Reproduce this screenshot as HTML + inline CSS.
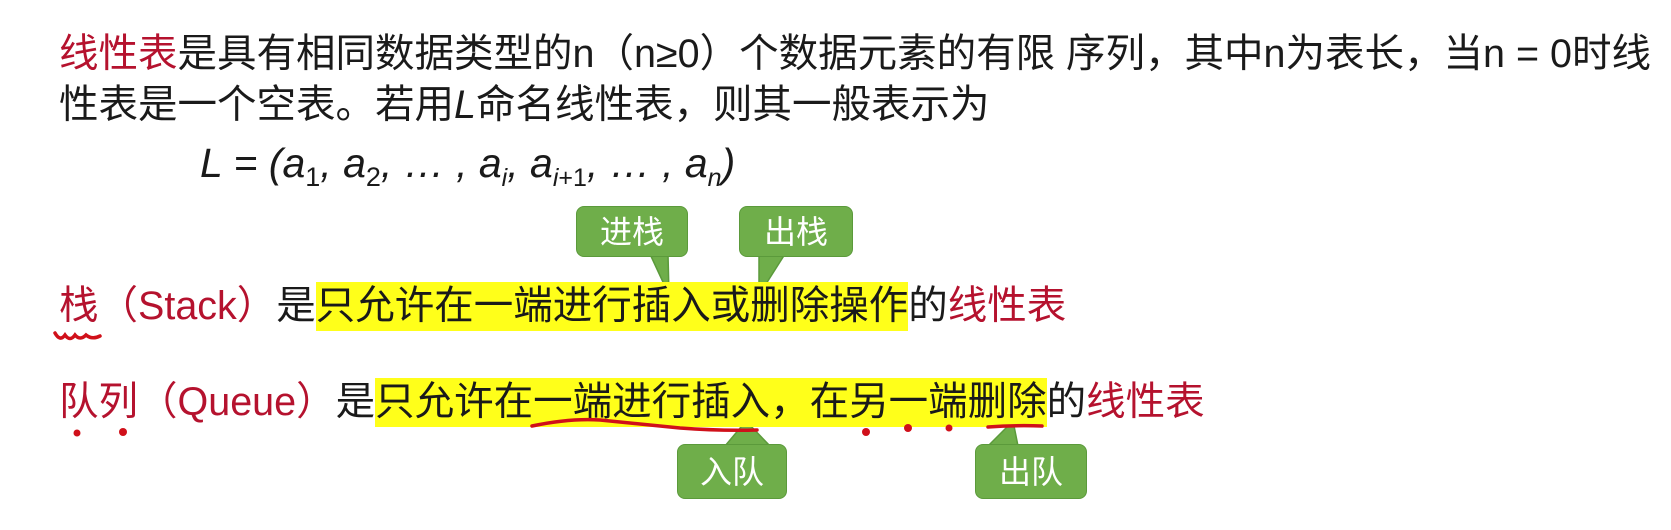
<!DOCTYPE html>
<html><head><meta charset="utf-8"><style>
body{margin:0;width:1671px;height:530px;background:#fff;position:relative;overflow:hidden;font-family:"Liberation Sans","Noto Sans CJK SC",sans-serif;color:#1a1a1a}
.l{position:absolute;font-size:39.5px;line-height:44px;white-space:nowrap}
.r{color:#b5122e}
.hl{background:#ffff1a;padding:2px 0 3px}
.b{position:absolute;background:#6fae4a;border:1.5px solid #5b9a3b;border-radius:8px;color:#fff;font-size:32px;text-align:center;font-family:"Noto Sans CJK SC",sans-serif;box-sizing:border-box}
svg{position:absolute;left:0;top:0}
</style></head><body>
<div class="l" style="left:59px;top:32px"><span class="r">线性表</span>是具有相同数据类型的n（n≥0）个数据元素的有限 序列，其中n为表长，当n = 0时线</div>
<div class="l" style="left:59px;top:83px">性表是一个空表。若用<i>L</i>命名线性表，则其一般表示为</div>
<div class="l" style="left:200px;top:139px;font-size:41px;font-style:italic;line-height:48px">L = (a<sub style="font-size:27px;font-style:normal">1</sub>, a<sub style="font-size:27px;font-style:normal">2</sub>, … , a<sub style="font-size:25px">i</sub>, a<sub style="font-size:25px">i<span style="font-style:normal">+1</span></sub>, … , a<sub style="font-size:25px">n</sub>)</div>

<svg width="1671" height="530">
<path d="M620 254 L668 254 L669 295 L650 254Z" fill="#6fae4a" stroke="#5b9a3b" stroke-width="1.5"/>
<path d="M759 254 L785 254 L759 295Z" fill="#6fae4a" stroke="#5b9a3b" stroke-width="1.5"/>
<path d="M725 446 L746 421 L770 446Z" fill="#6fae4a" stroke="#5b9a3b" stroke-width="1.5"/>
<path d="M988 446 L1013 421 L1018 446Z" fill="#6fae4a" stroke="#5b9a3b" stroke-width="1.5"/>
</svg>
<div class="b" style="left:576px;top:206px;width:112px;height:51px;line-height:46px">进栈</div>
<div class="b" style="left:739px;top:206px;width:114px;height:51px;line-height:46px">出栈</div>
<div class="b" style="left:677px;top:444px;width:110px;height:55px;line-height:50px">入队</div>
<div class="b" style="left:975px;top:444px;width:112px;height:55px;line-height:50px">出队</div>

<div class="l" style="left:59px;top:284px"><span class="r">栈（Stack）</span>是<span class="hl">只允许在一端进行插入或删除操作</span>的<span class="r">线性表</span></div>
<div class="l" style="left:59px;top:380px"><span class="r">队列（Queue）</span>是<span class="hl">只允许在一端进行插入，在另一端删除</span>的<span class="r">线性表</span></div>

<svg width="1671" height="530">
<g fill="none" stroke="#d0101a" stroke-width="3.5" stroke-linecap="round">
<path d="M55 333 Q60 342 65 335 Q70 342 75 335 Q80 341 86 335 Q92 340 100 336"/>
<path d="M532 426 Q570 418 600 420 Q640 424 680 428 Q720 431 757 430"/>
<path d="M988 427 Q1015 425 1042 426"/>
</g>
<g fill="#d0101a">
<circle cx="77" cy="433" r="3.5"/><circle cx="123" cy="432" r="4"/>
<circle cx="866" cy="432" r="4"/><circle cx="908" cy="428" r="4"/><circle cx="949" cy="428" r="3.5"/>
</g>
</svg>
</body></html>
